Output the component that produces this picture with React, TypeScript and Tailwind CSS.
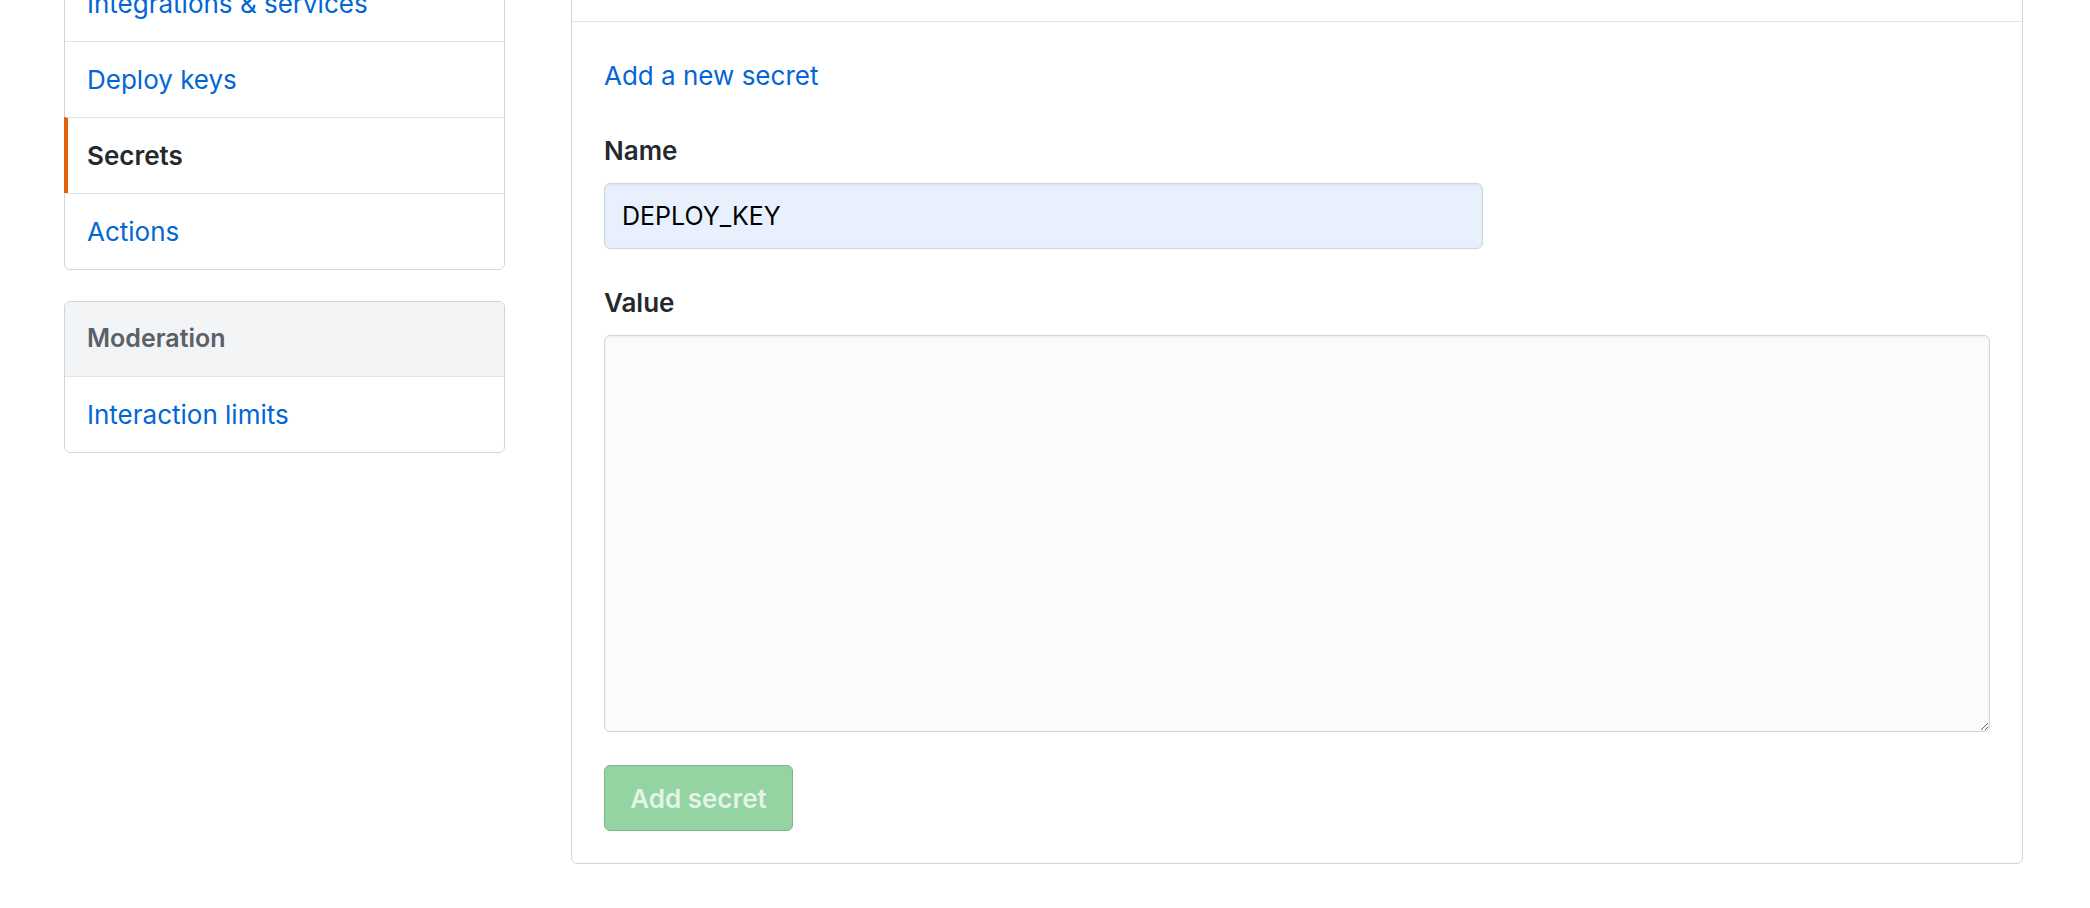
const font = { fontFamily: "Inter, 'Liberation Sans', sans-serif" };

const MenuItem = ({ label, selected = false }: { label: string; selected?: boolean }) => {
  if (selected) {
    return (
      <div className="-ml-px flex h-[76px] items-center border-t border-l-4 border-t-[#e1e4e8] border-l-[#e36209] pl-[19px] text-[26px] font-semibold text-[#24292e]">
        {label}
      </div>
    );
  }
  return (
    <div className="flex h-[76px] items-center border-t border-[#e1e4e8] px-[22px] text-[26px] text-[#0366d6] first:h-[75px] first:border-t-0">
      {label}
    </div>
  );
};

const Sidebar = () => {
  return (
    <div className="w-[441px] shrink-0">
      <div className="rounded-md border border-[#d1d5da] bg-white">
        <MenuItem label="Integrations & services" />
        <MenuItem label="Deploy keys" />
        <MenuItem label="Secrets" selected />
        <MenuItem label="Actions" />
      </div>
      <div className="mt-[31px] overflow-hidden rounded-md border border-[#d1d5da] bg-white">
        <div className="flex h-[74px] items-center bg-[#f3f4f6] px-[22px] text-[25px] font-semibold text-[#586069]">
          Moderation
        </div>
        <div className="flex h-[76px] items-center border-t border-[#e1e4e8] px-[22px] text-[26px] text-[#0366d6]">
          Interaction limits
        </div>
      </div>
    </div>
  );
};

const SecretForm = () => {
  return (
    <div className="w-[1452px] shrink-0 rounded-md border border-[#d1d5da] bg-white">
      <div className="h-[56px] border-b border-[#e1e4e8]" />
      <div className="px-[32px] pt-[34px] pb-[32px]">
        <a href="#" className="block text-[26px] leading-[40px] text-[#0366d6]">
          Add a new secret
        </a>
        <label className="mt-[35px] block text-[26px] font-semibold leading-[40px] text-[#24292e]">
          Name
        </label>
        <input
          defaultValue="DEPLOY_KEY"
          className="mt-[12px] block h-[66px] w-[879px] rounded-md border border-[#d1d5da] bg-[#e8f0fe] px-[17px] text-[25px] text-black shadow-[inset_0_1px_2px_rgba(27,31,35,0.075)] outline-none"
        />
        <label className="mt-[34px] block text-[26px] font-semibold leading-[40px] text-[#24292e]">
          Value
        </label>
        <textarea className="mt-[12px] block h-[397px] w-full rounded-md border border-[#d1d5da] bg-[#fafbfc] px-[17px] py-[12px] text-[25px] shadow-[inset_0_1px_2px_rgba(27,31,35,0.075)] outline-none" />
        <button
          disabled
          className="mt-[33px] flex h-[66px] w-[189px] items-center justify-center rounded-md border border-[#7db68a] bg-[#94d3a2] text-[26px] font-semibold text-[rgba(255,255,255,0.75)]"
        >
          Add secret
        </button>
      </div>
    </div>
  );
};

export default function App() {
  return (
    <div className="h-[908px] overflow-hidden bg-white" style={font}>
      <div className="-mt-[35px] flex gap-[66px] pl-[64px]">
        <Sidebar />
        <SecretForm />
      </div>
    </div>
  );
}
